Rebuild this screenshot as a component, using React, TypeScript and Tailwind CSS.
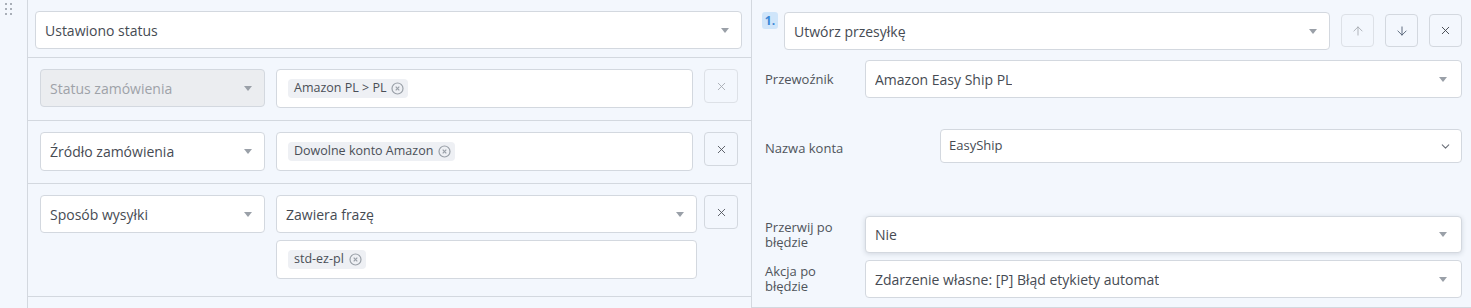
import React from 'react';
import { ArrowUp, ArrowDown, X, ChevronDown } from 'lucide-react';

const font = { fontFamily: '"Open Sans", "Noto Sans", sans-serif' };

// small grey triangle used by the select-like fields
function Caret() {
  return (
    <span className="ml-auto h-0 w-0 border-x-[4px] border-t-[5px] border-x-transparent border-t-[#9aa0a8]" />
  );
}

function SelectBox({
  value,
  className = '',
  disabled = false,
  caretPad = 'pr-[12px]',
}: {
  value: string;
  className?: string;
  disabled?: boolean;
  caretPad?: string;
}) {
  return (
    <div
      className={`flex items-center rounded-[4px] border border-[#d3d8df] pl-[9px] ${caretPad} text-[14px] ${
        disabled ? 'bg-[#ebedf0] text-[#9ea2a8]' : 'bg-white text-[#464b53]'
      } ${className}`}
    >
      <span className="truncate">{value}</span>
      <Caret />
    </div>
  );
}

function Tag({ label }: { label: string }) {
  return (
    <span className="inline-flex h-[19px] items-center gap-[5px] rounded-[4px] bg-[#eef0f4] pl-[6px] pr-[4px] text-[12.5px] text-[#4a4f57]">
      {label}
      <svg width="13" height="13" viewBox="0 0 13 13">
        <circle cx="6.5" cy="6.5" r="5.5" fill="none" stroke="#9aa0a8" strokeWidth="1.2" />
        <path d="M4.7 4.7 L8.3 8.3 M8.3 4.7 L4.7 8.3" stroke="#9aa0a8" strokeWidth="1.2" />
      </svg>
    </span>
  );
}

function TagInput({ label, className = '' }: { label: string; className?: string }) {
  return (
    <div
      className={`flex h-[39px] items-center rounded-[4px] border border-[#d3d8df] bg-white pl-[11px] ${className}`}
    >
      <Tag label={label} />
    </div>
  );
}

function RemoveButton({ muted = false, className = '' }: { muted?: boolean; className?: string }) {
  return (
    <button
      className={`flex h-[34px] w-[34px] shrink-0 items-center justify-center rounded-[4px] border ${
        muted ? 'border-[#dde1e7] text-[#a3a8af]' : 'border-[#d3d8df] text-[#4a4f57]'
      } ${className}`}
    >
      <X size={13} strokeWidth={1.6} />
    </button>
  );
}

function FieldLabel({ children, w = 'w-[100px]' }: { children: React.ReactNode; w?: string }) {
  return (
    <div className={`${w} shrink-0 pr-[12px] text-[13px] leading-[15px] text-[#4f545b]`}>
      {children}
    </div>
  );
}

export default function App() {
  return (
    <div className="flex h-[308px] w-[1471px] overflow-hidden bg-[#f3f7fd]" style={font}>
      {/* drag handle gutter */}
      <div className="w-[28px] shrink-0 border-r border-[#d3d8df] pl-[5px] pt-[3px]">
        <div className="grid w-[7px] grid-cols-2 gap-x-[3px] gap-y-[3px]">
          {Array.from({ length: 6 }).map((_, i) => (
            <span key={i} className="h-[2px] w-[2px] bg-[#a9afb8]" />
          ))}
        </div>
      </div>

      {/* conditions */}
      <div className="w-[724px] shrink-0 border-r border-[#d3d8df]">
        <div className="border-b border-[#d3d8df] pb-[8px] pl-[7px] pr-[9px] pt-[11px]">
          <SelectBox value="Ustawiono status" className="h-[38px]" />
        </div>

        <div className="flex gap-[11px] border-b border-[#d3d8df] pb-[12px] pl-[12px] pt-[11px]">
          <SelectBox value="Status zamówienia" disabled className="h-[38px] w-[225px]" />
          <TagInput label="Amazon PL > PL" className="w-[417px]" />
          <RemoveButton muted />
        </div>

        <div className="flex gap-[11px] border-b border-[#d3d8df] pb-[12px] pl-[12px] pt-[11px]">
          <SelectBox value="Źródło zamówienia" className="h-[39px] w-[225px]" />
          <TagInput label="Dowolne konto Amazon" className="w-[417px]" />
          <RemoveButton />
        </div>

        <div className="flex border-b border-[#d3d8df] pb-[17px] pl-[12px] pt-[11px]">
          <SelectBox value="Sposób wysyłki" className="h-[38px] w-[225px]" />
          <div className="ml-[11px] flex w-[421px] flex-col gap-[7px]">
            <SelectBox value="Zawiera frazę" className="h-[38px]" />
            <TagInput label="std-ez-pl" />
          </div>
          <RemoveButton className="ml-[7px]" />
        </div>
      </div>

      {/* action */}
      <div className="flex-1">
        <div className="border-b border-[#d3d8df] pb-[9px] pl-[10px] pr-[9px] pt-[12px]">
          <div className="flex items-start">
            <span className="flex h-[17px] w-[16px] items-center justify-center rounded-[3px] bg-[#cfe5fa] text-[12px] font-bold text-[#3b87d6]">
              1.
            </span>
            <SelectBox value="Utwórz przesyłkę" className="ml-[6px] h-[38px] flex-1" />
            <div className="ml-[11px] mt-[2px] flex gap-[11px]">
              <button className="flex h-[33px] w-[33px] items-center justify-center rounded-[4px] border border-[#dde1e7] text-[#a0a5ac]">
                <ArrowUp size={14} strokeWidth={1.4} />
              </button>
              <button className="flex h-[33px] w-[33px] items-center justify-center rounded-[4px] border border-[#d3d8df] text-[#4b5a6e]">
                <ArrowDown size={14} strokeWidth={1.5} />
              </button>
              <button className="flex h-[33px] w-[33px] items-center justify-center rounded-[4px] border border-[#d3d8df] text-[#3f444b]">
                <X size={13} strokeWidth={1.7} />
              </button>
            </div>
          </div>

          <div className="mt-[10px] flex items-center pl-[3px]">
            <FieldLabel>Przewoźnik</FieldLabel>
            <SelectBox value="Amazon Easy Ship PL" className="h-[38px] flex-1" caretPad="pr-[14px]" />
          </div>

          <div className="mt-[31px] flex items-center pl-[3px]">
            <div className="w-[175px] shrink-0 pt-[6px] text-[13px] text-[#4f545b]">Nazwa konta</div>
            <div className="flex h-[34px] flex-1 items-center rounded-[4px] border border-[#d3d8df] bg-white pl-[8px] pr-[9px] text-[13px] text-[#464b53]">
              EasyShip
              <ChevronDown size={13} strokeWidth={2} className="ml-auto text-[#6b7079]" />
            </div>
          </div>

          <div className="mt-[53px] flex items-center pl-[3px]">
            <FieldLabel>
              Przerwij po
              <br />
              błędzie
            </FieldLabel>
            <SelectBox
              value="Nie"
              className="h-[37px] flex-1 shadow-[0_1px_5px_rgba(40,50,70,0.16)]"
              caretPad="pr-[14px]"
            />
          </div>

          <div className="mt-[7px] flex items-center pl-[3px]">
            <FieldLabel>
              Akcja po
              <br />
              błędzie
            </FieldLabel>
            <SelectBox
              value="Zdarzenie własne: [P] Błąd etykiety automat"
              className="h-[38px] flex-1"
              caretPad="pr-[14px]"
            />
          </div>
        </div>
      </div>
    </div>
  );
}
